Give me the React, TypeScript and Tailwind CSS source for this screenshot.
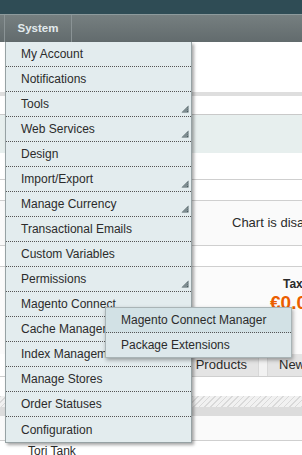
const items = [
  { label: "My Account" },
  { label: "Notifications" },
  { label: "Tools", sub: true },
  { label: "Web Services", sub: true },
  { label: "Design" },
  { label: "Import/Export", sub: true },
  { label: "Manage Currency", sub: true },
  { label: "Transactional Emails" },
  { label: "Custom Variables" },
  { label: "Permissions", sub: true },
  { label: "Magento Connect" },
  { label: "Cache Management" },
  { label: "Index Management" },
  { label: "Manage Stores" },
  { label: "Order Statuses" },
  { label: "Configuration" },
];

function Grip() {
  return (
    <svg width="8" height="8" viewBox="0 0 8 8" className="absolute right-[2px] bottom-[3px]">
      <path d="M7.5 0.5 L7.5 7.5 L0.5 7.5 Z" fill="#4a5a5e" />
      <path d="M2.5 7 L7 2.5 M4.5 7 L7 4.5" stroke="#c9d5d8" strokeWidth="0.8" />
    </svg>
  );
}

export default function App() {
  return (
    <div className="relative w-[302px] h-[455px] overflow-hidden bg-white font-['Liberation_Sans',Arial,sans-serif] text-[12px] text-[#2b2b2b]">
      {/* header */}
      <div className="h-[14px] bg-[#2f4c55]" />
      <div className="h-px bg-[#8d9a9c]" />
      <div className="flex h-[27px] bg-gradient-to-b from-[#767f80] to-[#626b6d]">
        <div className="w-[5px] border-r border-[#8a9395]" />
        <div className="flex w-[67px] items-center justify-center border-r border-[#8a9395] text-[11.5px] font-bold text-[#e2eaec]">
          System
        </div>
      </div>

      {/* page content behind the menu */}
      <div className="h-[50px]" />
      <div className="h-[4px] bg-[#dedede]" />
      <div className="h-[18px]" />
      <div className="h-[39px] border-t border-[#c9c9c9] bg-[#e7efee]" />
      <div className="h-[26px]" />
      <div className="h-[21px] border-t border-[#cfcfcf]" />
      <div className="flex h-[45px] items-center border-t border-[#cfcfcf] bg-[#fafafa] pl-[232px] text-[13px] text-[#2b2b2b] whitespace-nowrap">
        Chart is disabled
      </div>
      <div className="h-[21px] border-t border-[#cfcfcf]" />
      <div className="h-[88px] border-t border-[#cfcfcf] bg-[#fbfbfb] pl-[270px] pt-[8px] whitespace-nowrap">
        <div className="pl-[13px] text-[12px] font-bold text-[#2b2b2b]">Tax</div>
        <div className="text-[19px] font-bold leading-[20px] text-[#eb5e00]">€0.00</div>
      </div>
      <div className="flex h-[23px] border-b border-[#cfcfcf] text-[13px] whitespace-nowrap">
        <div className="w-[190px] shrink-0" />
        <div className="flex w-[68px] shrink-0 items-center justify-end overflow-hidden bg-[#e4e4e4] pr-[11px]">
          <span className="shrink-0">Most Viewed Products</span>
        </div>
        <div className="w-[10px] shrink-0 border-x border-[#d8d8d8] bg-[#f2f2f2]" />
        <div className="flex flex-1 items-center bg-[#e4e4e4] pl-[11px]">New Customers</div>
      </div>
      <div className="h-[19px]" />
      <div className="h-[11px] bg-[repeating-linear-gradient(135deg,#d9d9d9_0px,#d9d9d9_1px,#f1f1f1_1px,#f1f1f1_4px)]" />
      <div className="h-[9px] bg-[#dcdcdc]" />
      <div className="h-[25px] border-b border-[#cfcfcf] bg-[#fafafa]" />
      <div className="pl-[28px] pt-[1px] text-[12px]">Tori Tank</div>

      {/* System dropdown */}
      <div className="absolute left-[5px] top-[42px] w-[187px] border-x border-b border-[#97a2a4] bg-[#e3ecee] shadow-[2px_2px_3px_rgba(0,0,0,0.35)]">
        {items.map((it, i) => (
          <div
            key={it.label}
            className={
              "relative flex h-[25px] items-center pl-[15px] whitespace-nowrap" +
              (i < items.length - 1 ? " border-b border-dotted border-[#555]" : "")
            }
          >
            {it.label}
            {it.sub && <Grip />}
          </div>
        ))}
      </div>

      {/* Magento Connect submenu */}
      <div className="absolute left-[105px] top-[307px] w-[187px] border border-[#a9b4b6] bg-[#dde8eb] shadow-[1px_2px_4px_rgba(0,0,0,0.35)]">
        <div className="flex h-[25px] items-center border-b border-dotted border-[#555] bg-[#d2e1e5] pl-[15px] whitespace-nowrap">
          Magento Connect Manager
        </div>
        <div className="flex h-[24px] items-center pl-[15px] whitespace-nowrap">Package Extensions</div>
      </div>
    </div>
  );
}
